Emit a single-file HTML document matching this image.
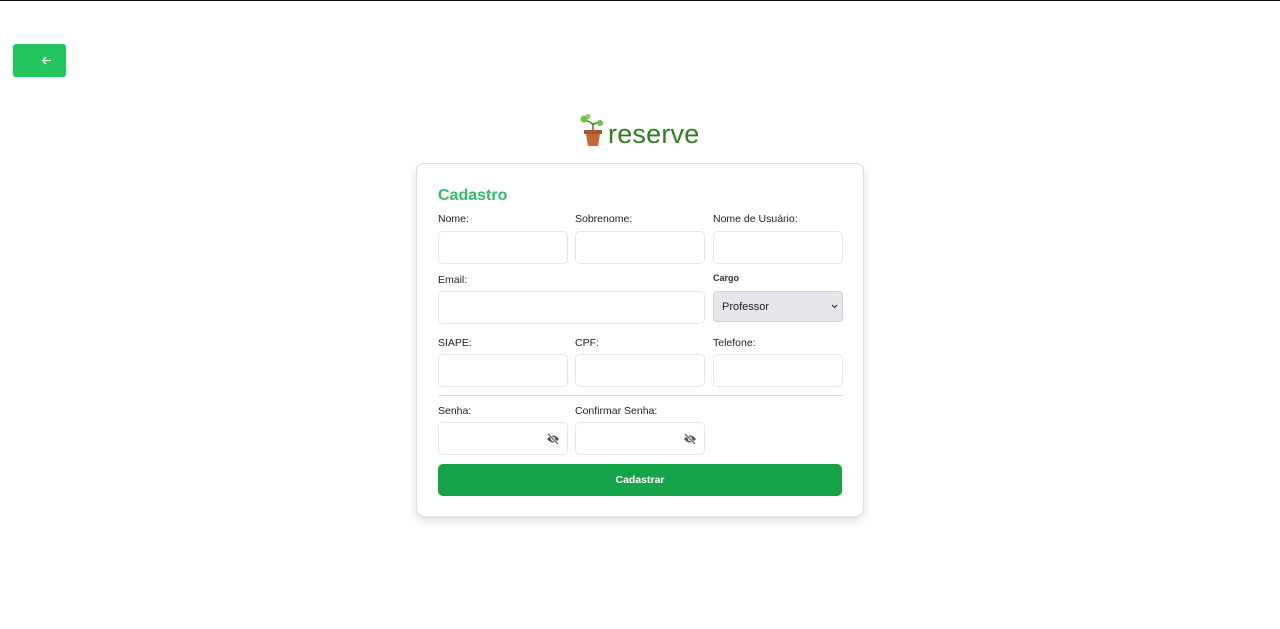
<!DOCTYPE html>
<html><head><meta charset="utf-8"><style>
*{box-sizing:border-box;margin:0;padding:0}
body{width:1280px;height:629px;background:#fff;font-family:"Liberation Sans",sans-serif;position:relative;overflow:hidden}
.a{position:absolute}
.back{left:13px;top:44px;width:53px;height:33px;background:#22c55e;border-radius:3px;box-shadow:0 1px 3px rgba(0,0,0,.15)}
.card{left:416px;top:163px;width:448px;height:354px;border:1px solid #ddd;border-radius:8px;box-shadow:0 4px 10px rgba(0,0,0,.12);background:#fff}
.lbl{font-size:10.5px;color:#222}
.in{border:1px solid #e5e7eb;border-radius:5px;height:33px;background:#fff}
</style></head><body>
<div class="a" style="left:0;top:0;width:1280px;height:1px;background:#111"></div>
<div class="a back"><svg width="53" height="33"><path d="M38 16.5h-8M33 13l-3.5 3.5L33 20" stroke="#fff" stroke-width="1.3" fill="none"/></svg></div>
<div class="a" style="left:579px;top:113px">
<svg width="28" height="34">
<path d="M14 20V10M14 12q-3-4-7-4M14 12q3-3 6-2" stroke="#4a8a2a" stroke-width="1.6" fill="none"/>
<circle cx="5" cy="6" r="3.5" fill="#6cc24a"/><circle cx="9" cy="3.5" r="2.5" fill="#7fd35a"/><circle cx="21" cy="10" r="3" fill="#6cc24a"/>
<rect x="5" y="17" width="18" height="4" fill="#b0532a"/><path d="M7 21h14l-2 12H9z" fill="#c8643a"/></svg></div>
<div class="a" style="left:608px;top:119px;font-size:27px;color:#2e7d1f;letter-spacing:0.2px">reserve</div>
<div class="a card"></div>
<div class="a" style="left:438px;top:187px;font-size:16px;font-weight:bold;color:#2fbf66">Cadastro</div>
<div class="a lbl" style="left:438px;top:213px">Nome:</div>
<div class="a lbl" style="left:575px;top:213px">Sobrenome:</div>
<div class="a lbl" style="left:713px;top:213px">Nome de Usuário:</div>
<div class="a in" style="left:438px;top:231px;width:130px"></div>
<div class="a in" style="left:575px;top:231px;width:130px"></div>
<div class="a in" style="left:713px;top:231px;width:130px"></div>
<div class="a lbl" style="left:438px;top:274px">Email:</div>
<div class="a" style="left:713px;top:273px;font-size:9px;font-weight:bold;color:#333">Cargo</div>
<div class="a in" style="left:438px;top:291px;width:267px"></div>
<div class="a" style="left:713px;top:291px;width:130px;height:31px;background:#e5e7eb;border:1px solid #d1d5db;border-radius:4px;font-size:11px;padding:9px 8px;color:#222">Professor<svg class="a" style="right:4px;top:12px" width="7" height="5"><path d="M1 1l2.5 2.5L6 1" stroke="#222" stroke-width="1.1" fill="none"/></svg></div>
<div class="a lbl" style="left:438px;top:337px">SIAPE:</div>
<div class="a lbl" style="left:575px;top:337px">CPF:</div>
<div class="a lbl" style="left:713px;top:337px">Telefone:</div>
<div class="a in" style="left:438px;top:354px;width:130px"></div>
<div class="a in" style="left:575px;top:354px;width:130px"></div>
<div class="a in" style="left:713px;top:354px;width:130px"></div>
<div class="a" style="left:438px;top:395px;width:405px;height:1px;background:#ddd"></div>
<div class="a lbl" style="left:438px;top:405px">Senha:</div>
<div class="a lbl" style="left:575px;top:405px">Confirmar Senha:</div>
<div class="a in" style="left:438px;top:422px;width:130px"><svg class="a" style="left:107px;top:10px" width="14" height="12"><path d="M1 6q6-7 12 0q-6 7-12 0z" fill="#555"/><circle cx="7" cy="6" r="2" fill="#fff"/><path d="M2 1l10 10" stroke="#fff" stroke-width="2.5"/><path d="M2 1l10 10" stroke="#555" stroke-width="1.2"/></svg></div>
<div class="a in" style="left:575px;top:422px;width:130px"><svg class="a" style="left:107px;top:10px" width="14" height="12"><path d="M1 6q6-7 12 0q-6 7-12 0z" fill="#555"/><circle cx="7" cy="6" r="2" fill="#fff"/><path d="M2 1l10 10" stroke="#fff" stroke-width="2.5"/><path d="M2 1l10 10" stroke="#555" stroke-width="1.2"/></svg></div>
<div class="a" style="left:438px;top:464px;width:404px;height:32px;background:#16a34a;border-radius:5px;color:#fff;font-size:10.5px;font-weight:bold;text-align:center;line-height:32px">Cadastrar</div>
</body></html>
